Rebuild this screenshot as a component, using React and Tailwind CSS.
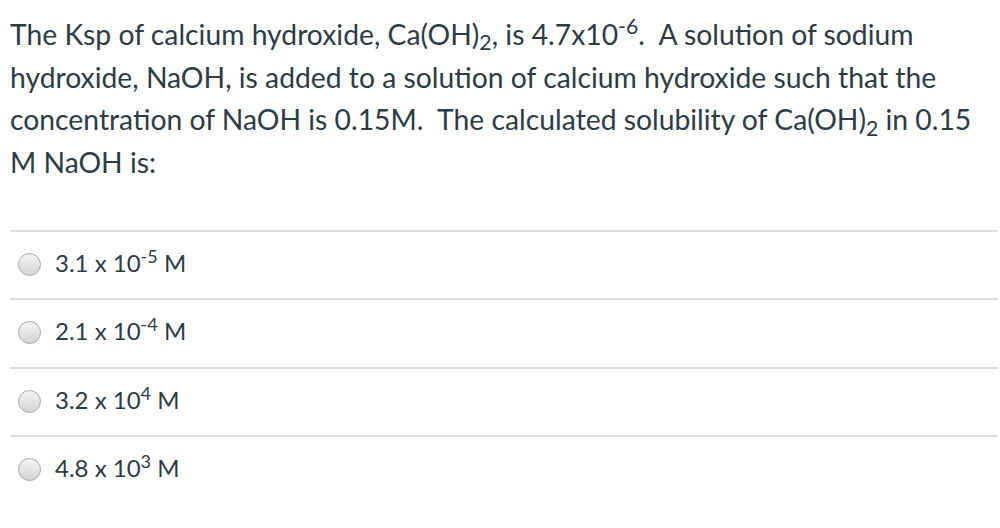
import React from 'react';

const ANSWERS = [
  { base: '3.1 x 10', exp: '-5' },
  { base: '2.1 x 10', exp: '-4' },
  { base: '3.2 x 10', exp: '4' },
  { base: '4.8 x 10', exp: '3' },
];

const Radio = () => (
  <span className="inline-block w-[23px] h-[23px] mt-[2px] rounded-full border border-[#a9a9a9] bg-gradient-to-b from-[#f4f4f4] to-[#d4d4d4] shrink-0" />
);

export default function App() {
  return (
    <div className="w-[1000px] h-[528px] bg-white font-['Lato','Liberation_Sans',sans-serif] text-[#2d3b45] overflow-hidden">
      <div className="pl-[10px] pr-[10px] pt-[13px] text-[28.3px] leading-[42.7px]">
        The Ksp of calcium hydroxide, Ca(OH)<sub>2</sub>, is 4.7x10<sup>-6</sup>.&nbsp; A solution of sodium
        hydroxide, NaOH, is added to a solution of calcium hydroxide such that the concentration of NaOH is 0.15M.&nbsp; The calculated solubility of Ca(OH)<sub>2</sub> in 0.15 M NaOH is:
      </div>
      <div className="mt-[46px] ml-[10px] mr-[2px]">
        {ANSWERS.map((a, i) => (
          <div key={i} className="h-[68.4px] border-t-2 border-[#dddddd] flex items-start pt-[19px] pl-[8px] gap-[14px]">
            <Radio />
            <span className="text-[24px] leading-none">
              {a.base}
              <sup>{a.exp}</sup> M
            </span>
          </div>
        ))}
      </div>
    </div>
  );
}
